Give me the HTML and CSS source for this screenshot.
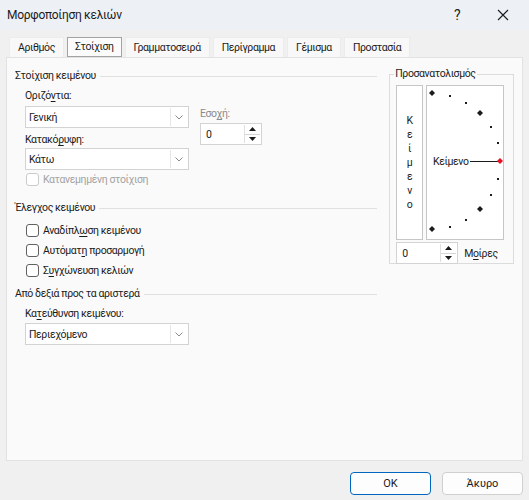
FILE: index.html
```html
<!DOCTYPE html>
<html lang="el">
<head>
    <meta charset="UTF-8">
    <meta name="viewport" content="width=device-width, initial-scale=1.0">
    <title>Μορφοποίηση κελιών</title>
    <link rel="stylesheet" href="styles.css">
</head>
<body>
    <div id="dialog">
        <div class="titlebar">
            <span class="title">Μορφοποίηση κελιών</span>
            <span class="title-btn">?</span>
            <span class="title-btn">
                <svg width="12" height="12" viewBox="0 0 12 12"><path d="M1 1L11 11M11 1L1 11" stroke="#1b1b1b" stroke-width="1.1" fill="none"/></svg>
            </span>
        </div>

        <div class="tabs">
            <div class="tab">Αριθμός</div>
            <div class="tab active">Στοίχιση</div>
            <div class="tab">Γραμματοσειρά</div>
            <div class="tab">Περίγραμμα</div>
            <div class="tab">Γέμισμα</div>
            <div class="tab">Προστασία</div>
        </div>

        <div class="panel">
            <div class="left">
                <div class="group-title">Στοίχιση κειμένου</div>
                <div class="align-row">
                    <div class="align-col">
                        <div class="label">Οριζό<u>ν</u>τια:</div>
                        <div class="select">
                            <span class="select-text">Γενική</span>
                            <span class="drop"><svg width="8" height="5" viewBox="0 0 8 5"><path d="M0.5 0.5L4 4L7.5 0.5" stroke="#8a8a8a" fill="none"/></svg></span>
                        </div>
                        <div class="label gap">Κατακό<u>ρ</u>υφη:</div>
                        <div class="select">
                            <span class="select-text">Κάτω</span>
                            <span class="drop"><svg width="8" height="5" viewBox="0 0 8 5"><path d="M0.5 0.5L4 4L7.5 0.5" stroke="#8a8a8a" fill="none"/></svg></span>
                        </div>
                    </div>
                    <div class="indent-col">
                        <div class="label muted">Εσο<u>χ</u>ή:</div>
                        <div class="spin">
                            <span class="spin-text">0</span>
                            <span class="spin-btns">
                                <span class="arrow"><svg width="7" height="4" viewBox="0 0 7 4"><path d="M0 4L3.5 0L7 4Z" fill="#1b1b1b"/></svg></span>
                                <span class="arrow"><svg width="7" height="4" viewBox="0 0 7 4"><path d="M0 0L3.5 4L7 0Z" fill="#1b1b1b"/></svg></span>
                            </span>
                        </div>
                    </div>
                </div>
                <div class="check disabled first"><span class="box"></span><span>Κατανεμημένη στοίχιση</span></div>

                <div class="group-title second">Έλεγχος κειμένου</div>
                <div class="checks">
                    <div class="check"><span class="box"></span><span>Αναδίπλ<u>ω</u>ση κειμένου</span></div>
                    <div class="check"><span class="box"></span><span>Αυτόματ<u>η</u> προσαρμογή</span></div>
                    <div class="check"><span class="box"></span><span>Σ<u>υ</u>γχώνευση κελιών</span></div>
                </div>

                <div class="group-title third">Από δεξιά προς τα αριστερά</div>
                <div class="direction">
                    <div class="label">Κα<u>τ</u>εύθυνση κειμένου:</div>
                    <div class="select">
                        <span class="select-text">Περιεχόμενο</span>
                        <span class="drop"><svg width="8" height="5" viewBox="0 0 8 5"><path d="M0.5 0.5L4 4L7.5 0.5" stroke="#8a8a8a" fill="none"/></svg></span>
                    </div>
                </div>
            </div>

            <fieldset class="orient">
                <legend>Προσανατολισμός</legend>
                <div class="orient-boxes">
                    <div class="vertical-text">
                        <span>Κ</span><span>ε</span><span>ί</span><span>μ</span><span>ε</span><span>ν</span><span>ο</span>
                    </div>
                    <div class="dial">
                        <svg width="76" height="153" viewBox="0 0 76 153">
                            <g fill="#1b1b1b">
                                <polygon points="5,4 8,7 5,10 2,7"/>
                                <rect x="22" y="9" width="2" height="2"/>
                                <rect x="38" y="16" width="2" height="2"/>
                                <polygon points="53,24 56,27 53,30 50,27"/>
                                <rect x="63" y="40" width="2" height="2"/>
                                <rect x="70" y="56" width="2" height="2"/>
                                <rect x="70" y="92" width="2" height="2"/>
                                <rect x="63" y="108" width="2" height="2"/>
                                <polygon points="53,120 56,123 53,126 50,123"/>
                                <rect x="38" y="133" width="2" height="2"/>
                                <rect x="22" y="140" width="2" height="2"/>
                                <polygon points="5,140 8,143 5,146 2,143"/>
                            </g>
                            <text x="6" y="79" class="dial-text">Κείμενο</text>
                            <line x1="43" y1="75.5" x2="71" y2="75.5" stroke="#1b1b1b" stroke-width="1"/>
                            <polygon points="73,72 76,75 73,78 70,75" fill="#e81123"/>
                        </svg>
                    </div>
                </div>
                <div class="degrees">
                    <div class="spin">
                        <span class="spin-text">0</span>
                        <span class="spin-btns">
                            <span class="arrow"><svg width="7" height="4" viewBox="0 0 7 4"><path d="M0 4L3.5 0L7 4Z" fill="#1b1b1b"/></svg></span>
                            <span class="arrow"><svg width="7" height="4" viewBox="0 0 7 4"><path d="M0 0L3.5 4L7 0Z" fill="#1b1b1b"/></svg></span>
                        </span>
                    </div>
                    <span class="degrees-label">Μ<u>ο</u>ίρες</span>
                </div>
            </fieldset>
        </div>

        <div class="footer">
            <button type="button" class="btn primary">OK</button>
            <button type="button" class="btn">Άκυρο</button>
        </div>
    </div>
</body>
</html>
```

FILE: styles.css
```css
body {
    margin: 0;
    background-color: #f0f0f0;
    font-family: Roboto, "Noto Sans", sans-serif;
    font-size: 10.5px;
    letter-spacing: -0.4px;
    color: #1b1b1b;
}

#dialog {
    width: 529px;
    height: 500px;
    display: flex;
    flex-direction: column;
}

u {
    text-underline-offset: 2px;
}

/* title bar */
.titlebar {
    height: 30px;
    background-color: #edf1f6;
    display: flex;
    align-items: center;
    padding-left: 7px;
    padding-right: 3px;
}

.title {
    flex: 1;
    font-size: 12px;
    letter-spacing: -0.3px;
}

.title-btn {
    width: 46px;
    height: 30px;
    display: flex;
    align-items: center;
    justify-content: center;
    font-size: 14px;
}

/* tabs */
.tabs {
    display: flex;
    gap: 3px;
    margin-top: 7px;
    padding-left: 9px;
}

.tab {
    height: 19px;
    line-height: 19px;
    padding: 0 8px;
    background-color: #f8f8f8;
    border: 1px solid #ececec;
    border-bottom: none;
}

.tab.active {
    background-color: #fbfbfb;
    border: 1px solid #a3a3a3;
    height: 18px;
    line-height: 18px;
    padding: 0 7px;
}

/* panel */
.panel {
    margin: 0 6px;
    height: 392px;
    border: 1px solid #e2e2e2;
    background-color: #fafafa;
    display: flex;
    padding: 10px 8px 0 8px;
}

.left {
    width: 363px;
}

.group-title {
    display: flex;
    align-items: center;
    line-height: 16px;
}

.group-title::after {
    content: "";
    flex: 1;
    height: 1px;
    background-color: #e0e0e0;
    margin-left: 4px;
}

.group-title.second {
    margin-top: 13px;
}

.group-title.third {
    margin-top: 6px;
}

.label {
    line-height: 16px;
    margin-top: 4px;
    margin-bottom: 2px;
}

.label.gap {
    margin-top: 4px;
    margin-bottom: 0;
}

.label.muted {
    color: #8a8a8a;
    margin-bottom: 1px;
}

.align-row {
    display: flex;
    padding-left: 10px;
}

.align-col {
    width: 164px;
}

.indent-col {
    margin-left: 11px;
    padding-top: 18px;
}

.select {
    height: 20px;
    border: 1px solid #d3d3d3;
    background-color: #fff;
    display: flex;
    align-items: center;
}

.select-text {
    flex: 1;
    padding-left: 3px;
}

.drop {
    width: 16px;
    height: 18px;
    margin-right: 1px;
    border-left: 1px solid #e6e6e6;
    display: flex;
    align-items: center;
    justify-content: center;
}

.spin {
    width: 60px;
    height: 20px;
    border: 1px solid #d3d3d3;
    background-color: #fff;
    display: flex;
    align-items: center;
}

.spin-text {
    flex: 1;
    padding-left: 5px;
}

.spin-btns {
    width: 15px;
    height: 18px;
    margin-right: 1px;
    border-left: 1px solid #e0e0e0;
    display: flex;
    flex-direction: column;
}

.arrow {
    flex: 1;
    display: flex;
    align-items: center;
    justify-content: center;
}

.arrow + .arrow {
    border-top: 1px solid #d6d6d6;
}

/* checkboxes */
.check {
    display: flex;
    align-items: center;
    gap: 4px;
    height: 20px;
    margin-left: 11px;
}

.check.first {
    height: 16px;
    margin-top: 1px;
}

.checks {
    margin-top: 4px;
}

.box {
    width: 11px;
    height: 11px;
    border: 1px solid #616161;
    border-radius: 3px;
    background-color: #fff;
}

.check.disabled {
    color: #a3a3a3;
}

.check.disabled .box {
    border-color: #cbcbcb;
}

.direction {
    padding-left: 10px;
    width: 164px;
    margin-top: 2px;
}

.direction .label {
    margin-top: 4px;
    margin-bottom: 1px;
}

/* orientation */
.orient {
    margin: -2px 0 0 12px;
    width: 109px;
    height: 188px;
    padding: 3px 8px 5px 6px;
    border: 1px solid #dcdcdc;
}

.orient legend {
    padding: 0 1px;
    margin-left: -2px;
    line-height: 16px;
}

.orient-boxes {
    display: flex;
    gap: 3px;
}

.vertical-text {
    width: 25px;
    height: 153px;
    border: 1px solid #c6c6c6;
    background-color: #fff;
    display: flex;
    flex-direction: column;
    align-items: center;
    justify-content: center;
    line-height: 14px;
    letter-spacing: 0;
}

.dial {
    width: 76px;
    height: 153px;
    border: 1px solid #c6c6c6;
    background-color: #fff;
}

.dial svg {
    display: block;
}

.dial-text {
    font-family: Roboto, "Noto Sans", sans-serif;
    font-size: 10.5px;
    fill: #1b1b1b;
}

.degrees {
    display: flex;
    align-items: center;
    margin-top: 2px;
}

.degrees-label {
    margin-left: 6px;
}

/* footer */
.footer {
    display: flex;
    justify-content: flex-end;
    gap: 11px;
    padding: 11px 6px 0 0;
}

.btn {
    width: 81px;
    height: 23px;
    font-family: Roboto, "Noto Sans", sans-serif;
    font-size: 11px;
    color: #1b1b1b;
    background-color: #fdfdfd;
    border: 1px solid #d0d0d0;
    border-radius: 4px;
    padding: 0;
}

.btn.primary {
    border-color: #0067c0;
}
```
